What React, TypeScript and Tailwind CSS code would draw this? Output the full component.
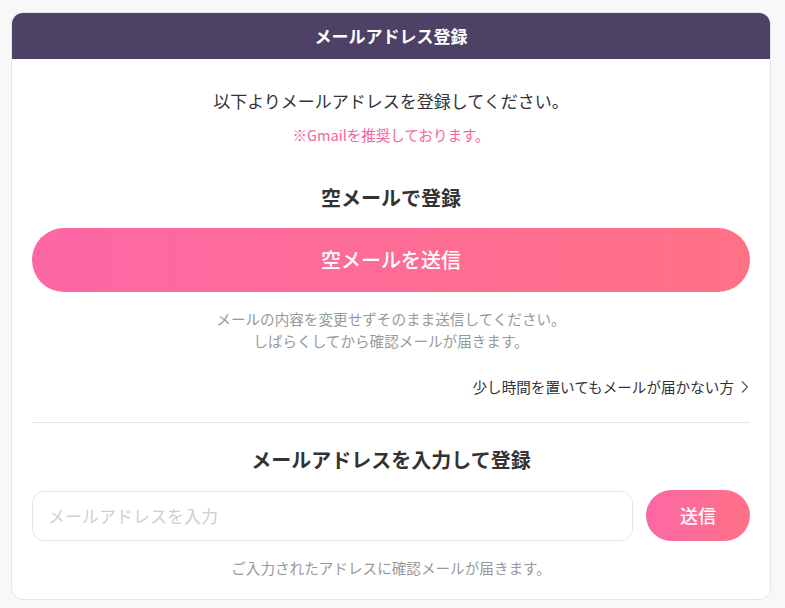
import React from "react";

export default function App() {
  const font = { fontFamily: '"Noto Sans CJK JP", "Noto Sans", sans-serif' };
  return (
    <div className="min-h-[608px] w-[785px] bg-[#f8f8f8] pt-3 pl-[11px]" style={font}>
      <div className="w-[760px] overflow-hidden rounded-[12px] border border-[#e6e6e6] bg-white">
        <div className="flex h-[46px] items-center justify-center bg-[#4d4266] text-[17px] font-bold text-white">
          メールアドレス登録
        </div>
        <div className="flex flex-col px-5 pb-5">
          <p className="mt-[30px] text-center text-[17px] leading-[24px] text-[#333]">
            以下よりメールアドレスを登録してください。
          </p>
          <p className="mt-3 text-center text-[14.5px] leading-[20px] text-[#f5649a]">
            ※Gmailを推奨しております。
          </p>
          <h2 className="mt-[39px] text-center text-[20px] font-bold leading-[28px] text-[#333]">
            空メールで登録
          </h2>
          <button className="mt-4 flex h-16 w-full items-center justify-center rounded-full bg-gradient-to-r from-[#fc67a5] to-[#ff7185] text-[20px] font-medium text-white">
            空メールを送信
          </button>
          <p className="mt-4 text-center text-[14.6px] leading-[22px] text-[#999]">
            メールの内容を変更せずそのまま送信してください。
            <br />
            しばらくしてから確認メールが届きます。
          </p>
          <div className="mt-6 flex items-center justify-end gap-1 text-[14.6px] leading-[22px] text-[#333]">
            <span>少し時間を置いてもメールが届かない方</span>
            <svg width="10" height="14" viewBox="0 0 10 14" fill="none" className="ml-[2px]">
              <path d="M2 1.5 L7.5 7 L2 12.5" stroke="#555" strokeWidth="1.1" />
            </svg>
          </div>
          <div className="mt-6 h-px w-full bg-[#e5e5e5]" />
          <h2 className="mt-[23px] text-center text-[20px] font-bold leading-[28px] text-[#333]">
            メールアドレスを入力して登録
          </h2>
          <div className="mt-4 flex items-center gap-[13px]">
            <input
              type="text"
              placeholder="メールアドレスを入力"
              className="h-[50px] flex-1 rounded-[12px] border border-[#e5e5e5] px-[15px] text-[17px] text-[#333] outline-none placeholder:text-[#cfcfcf]"
              style={font}
            />
            <button className="flex h-[51px] w-[104px] items-center justify-center rounded-full bg-gradient-to-r from-[#fc67a5] to-[#ff7185] text-[18px] font-medium text-white">
              送信
            </button>
          </div>
          <p className="mt-4 text-center text-[14.6px] leading-[22px] text-[#999]">
            ご入力されたアドレスに確認メールが届きます。
          </p>
        </div>
      </div>
    </div>
  );
}
